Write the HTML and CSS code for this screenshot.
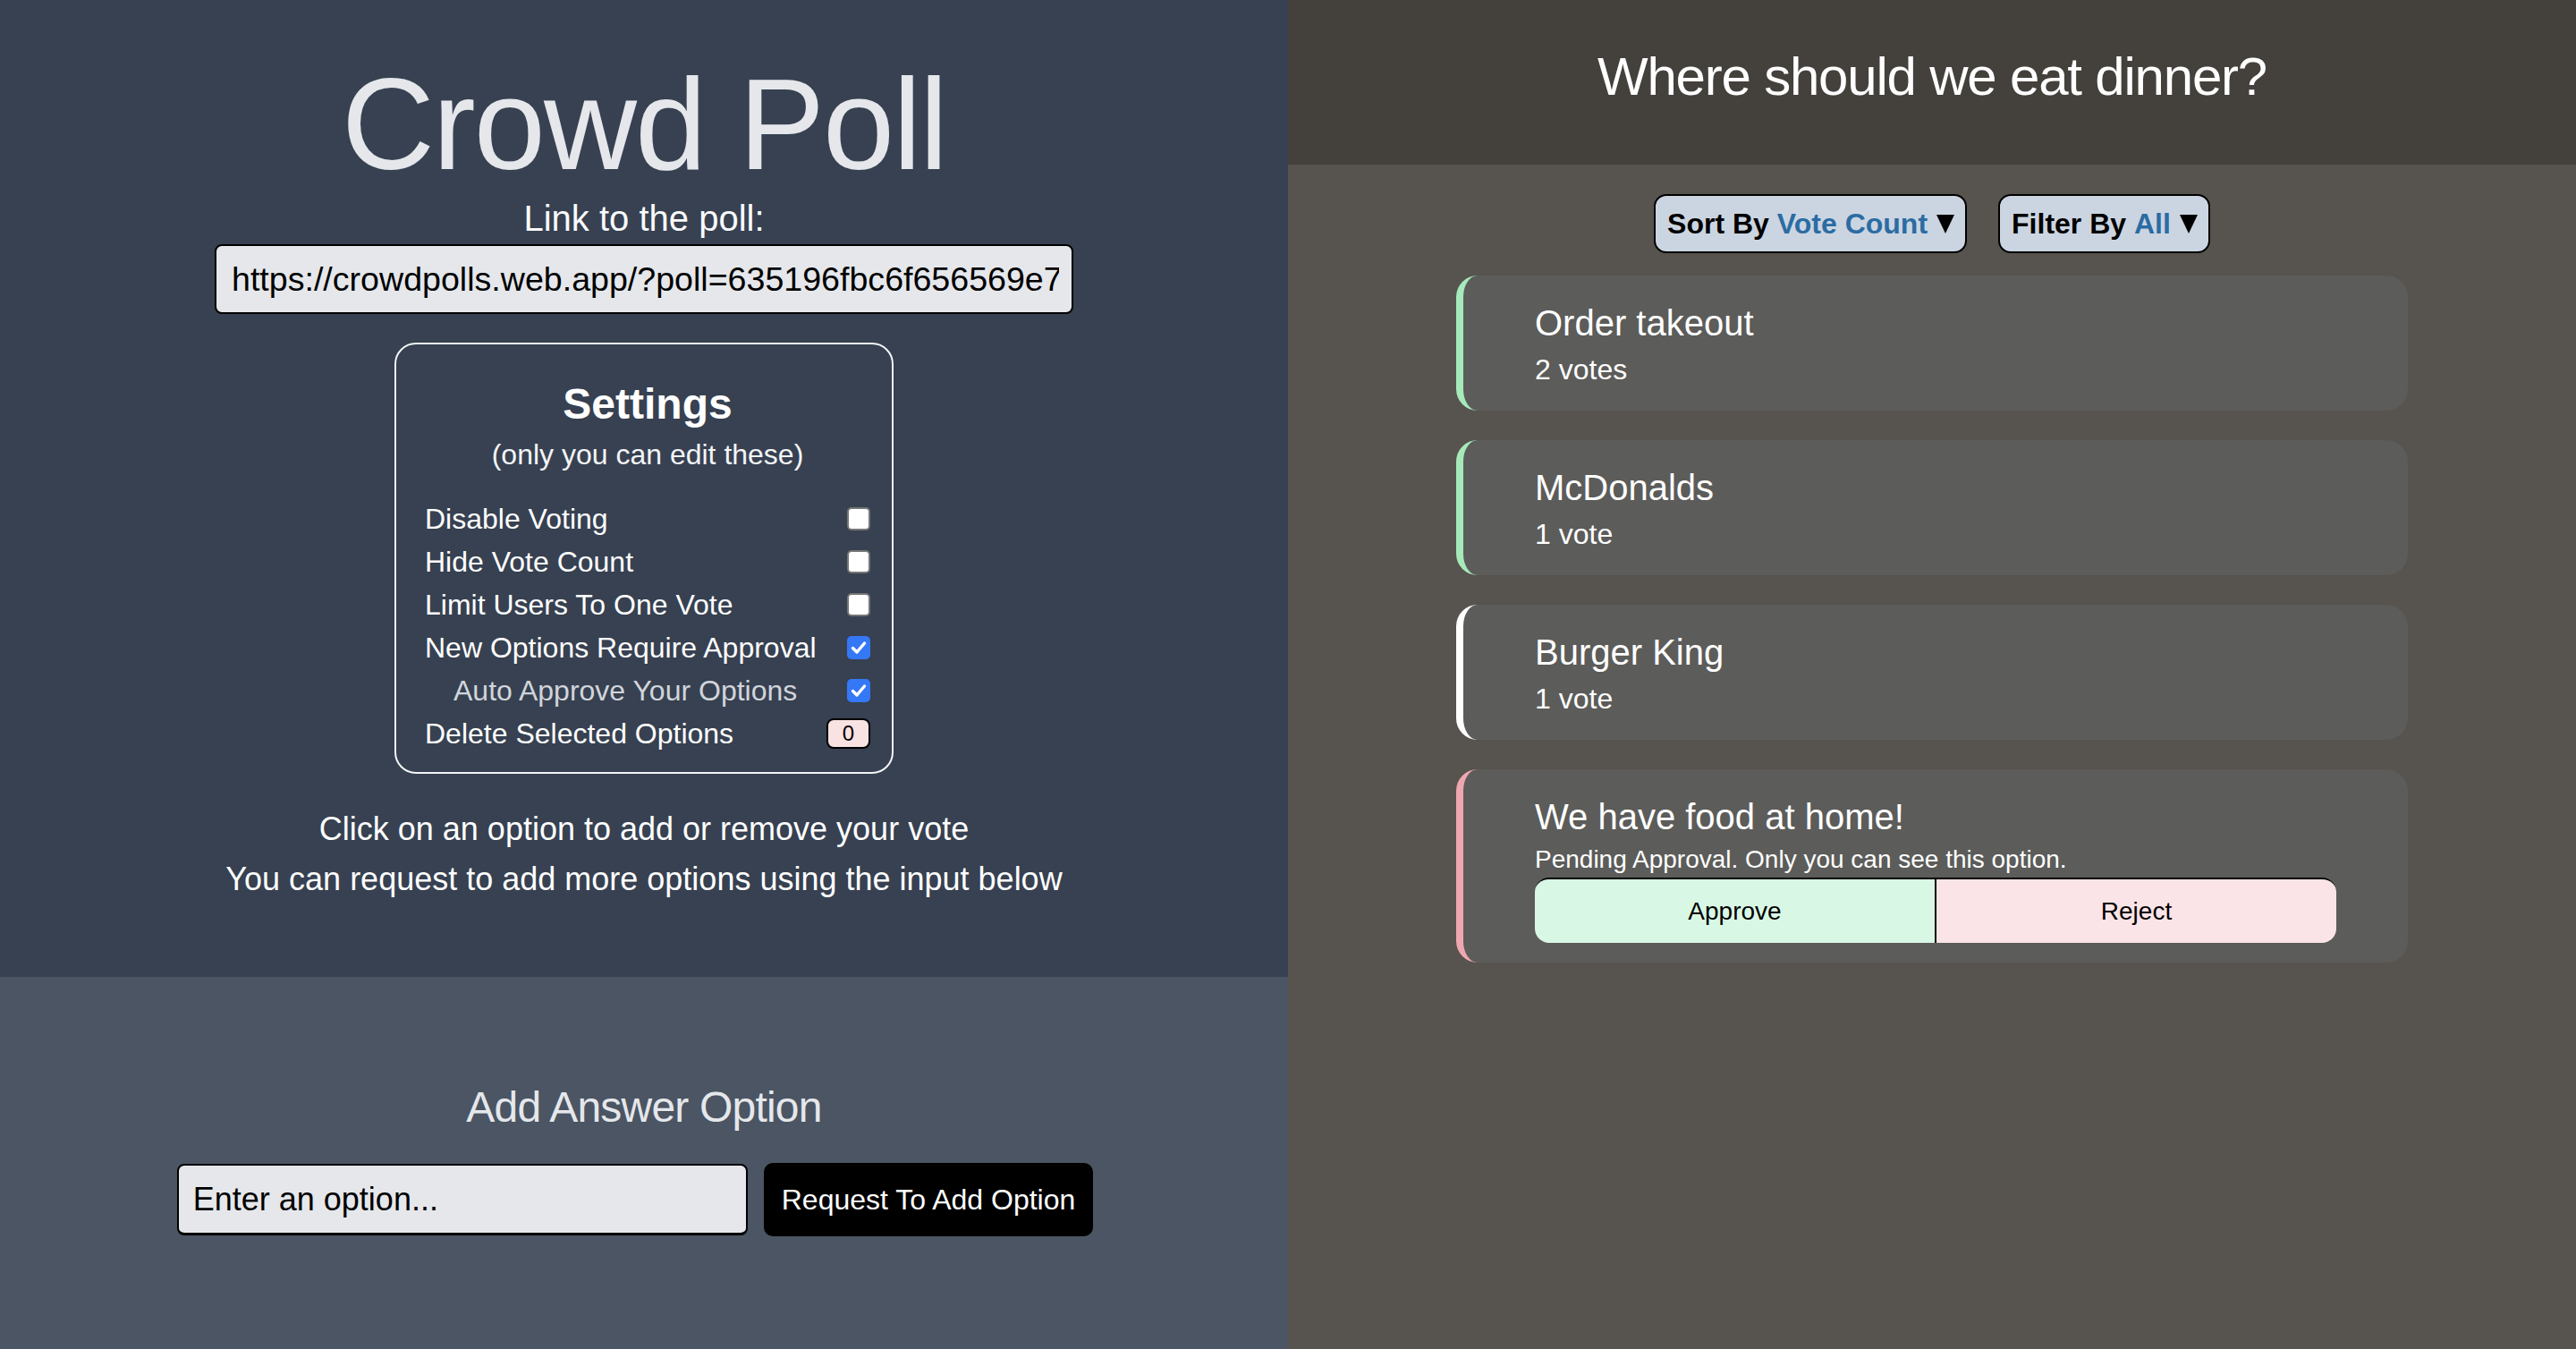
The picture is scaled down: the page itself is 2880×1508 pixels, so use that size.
FILE: index.html
```html
<!DOCTYPE html>
<html lang="en">
<head>
<meta charset="utf-8">
<title>Crowd Poll</title>
<link rel="stylesheet" href="styles.css">
</head>
<body>
<main class="app">
  <section class="left">
    <div class="left-top">
      <h1 class="brand">Crowd Poll</h1>
      <div class="link-label">Link to the poll:</div>
      <input class="link-input" type="text" readonly value="https://crowdpolls.web.app/?poll=635196fbc6f656569e7d2a41">
      <div class="settings">
        <h2 class="settings-title">Settings</h2>
        <div class="settings-sub">(only you can edit these)</div>
        <div class="settings-rows">
          <div class="row"><span>Disable Voting</span><span class="check"></span></div>
          <div class="row"><span>Hide Vote Count</span><span class="check"></span></div>
          <div class="row"><span>Limit Users To One Vote</span><span class="check"></span></div>
          <div class="row"><span>New Options Require Approval</span><span class="check on"><svg viewBox="0 0 26 26" width="26" height="26"><path d="M6.5 13.5 L11 18 L19.5 8" fill="none" stroke="#fff" stroke-width="3.4" stroke-linecap="round" stroke-linejoin="round"/></svg></span></div>
          <div class="row sub"><span>Auto Approve Your Options</span><span class="check on"><svg viewBox="0 0 26 26" width="26" height="26"><path d="M6.5 13.5 L11 18 L19.5 8" fill="none" stroke="#fff" stroke-width="3.4" stroke-linecap="round" stroke-linejoin="round"/></svg></span></div>
          <div class="row"><span>Delete Selected Options</span><button class="del-btn">0</button></div>
        </div>
      </div>
      <p class="hint">Click on an option to add or remove your vote<br>You can request to add more options using the input below</p>
    </div>
    <div class="left-bottom">
      <h2 class="add-title">Add Answer Option</h2>
      <div class="add-row">
        <input class="add-input" type="text" placeholder="Enter an option...">
        <button class="add-btn">Request To Add Option</button>
      </div>
    </div>
  </section>
  <section class="right">
    <header class="question">Where should we eat dinner?</header>
    <div class="poll">
      <div class="controls">
        <button class="pick">Sort By <span class="val">Vote Count</span><svg class="tri" viewBox="0 0 20 22" width="20" height="22"><path d="M0 1 H20 L10 22 Z" fill="#000"/></svg></button>
        <button class="pick">Filter By <span class="val">All</span><svg class="tri" viewBox="0 0 20 22" width="20" height="22"><path d="M0 1 H20 L10 22 Z" fill="#000"/></svg></button>
      </div>
      <div class="cards">
        <div class="card voted">
          <div class="card-title">Order takeout</div>
          <div class="card-votes">2 votes</div>
        </div>
        <div class="card voted">
          <div class="card-title">McDonalds</div>
          <div class="card-votes">1 vote</div>
        </div>
        <div class="card plain">
          <div class="card-title">Burger King</div>
          <div class="card-votes">1 vote</div>
        </div>
        <div class="card pending">
          <div class="card-title">We have food at home!</div>
          <div class="card-pending">Pending Approval. Only you can see this option.</div>
          <div class="decide">
            <button class="approve">Approve</button>
            <button class="reject">Reject</button>
          </div>
        </div>
      </div>
    </div>
  </section>
</main>
</body>
</html>
```

FILE: styles.css
```css
* { box-sizing: border-box; }

html, body {
  margin: 0;
  padding: 0;
  width: 2880px;
  height: 1508px;
  overflow: hidden;
}

body {
  font-family: "Liberation Sans", Arial, sans-serif;
  color: #fff;
}

.app {
  display: grid;
  grid-template-columns: 1440px 1440px;
  height: 1508px;
}

/* ---------- left ---------- */
.left {
  display: flex;
  flex-direction: column;
  height: 1508px;
}

.left-top {
  height: 1092px;
  background: #374151;
  display: flex;
  flex-direction: column;
  align-items: center;
  padding-top: 68px;
}

.brand {
  margin: 0;
  font-size: 144px;
  line-height: 144px;
  font-weight: 400;
  letter-spacing: -2px;
  color: #e5e7eb;
}

.link-label {
  margin-top: 4px;
  font-size: 40px;
  line-height: 56px;
  color: #f9fafb;
}

.link-input {
  margin-top: 1px;
  width: 960px;
  height: 78px;
  background: #e5e7eb;
  border: 2px solid #000;
  border-radius: 8px;
  padding: 0 14px 0 17px;
  font-family: "Liberation Sans", Arial, sans-serif;
  font-size: 37.6px;
  color: #000;
  outline: none;
}

.settings {
  margin-top: 32px;
  width: 558px;
  border: 2px solid #f3f4f6;
  border-radius: 24px;
  padding: 35px 24px 19px 32px;
  display: flex;
  flex-direction: column;
}

.settings-title {
  margin: 0;
  text-align: center;
  font-size: 48px;
  line-height: 64px;
  font-weight: 700;
  color: #fff;
}

.settings-sub {
  text-align: center;
  font-size: 32px;
  line-height: 48px;
  color: #f3f4f6;
}

.settings-rows {
  margin-top: 24px;
  display: flex;
  flex-direction: column;
}

.row {
  height: 48px;
  display: flex;
  align-items: center;
  justify-content: space-between;
  font-size: 32px;
  color: #fff;
}

.row.sub {
  padding-left: 32px;
  color: #d1d5db;
}

.check {
  width: 26px;
  height: 26px;
  border-radius: 5px;
  border: 2px solid #767676;
  background: #fff;
  display: flex;
  align-items: center;
  justify-content: center;
  flex: none;
}

.check.on {
  border: none;
  background: #3478f6;
}

.check svg { display: block; }

.del-btn {
  height: 34px;
  padding: 0 16px;
  background: #f9e2e2;
  border: 2px solid #000;
  border-radius: 8px;
  font-family: "Liberation Sans", Arial, sans-serif;
  font-size: 24px;
  color: #000;
}

.hint {
  margin: 34px 0 0;
  text-align: center;
  font-size: 36px;
  line-height: 56px;
  color: #fff;
}

.left-bottom {
  flex: 1;
  background: #4b5563;
  display: flex;
  flex-direction: column;
  align-items: center;
  padding-top: 114px;
}

.add-title {
  margin: 0;
  font-size: 48px;
  line-height: 64px;
  font-weight: 400;
  letter-spacing: -0.8px;
  color: #e5e7eb;
}

.add-row {
  margin-top: 30px;
  display: flex;
  align-items: center;
  gap: 18px;
  padding-right: 20px;
}

.add-input {
  width: 638px;
  height: 80px;
  background: #e5e7eb;
  border: 2px solid #000;
  border-bottom-width: 3px;
  border-radius: 8px;
  padding: 0 16px;
  font-family: "Liberation Sans", Arial, sans-serif;
  font-size: 36px;
  color: #000;
  outline: none;
}

.add-input::placeholder { color: #000; }

.add-btn {
  height: 82px;
  padding: 0 20px;
  background: #000;
  border: none;
  border-radius: 10px;
  font-family: "Liberation Sans", Arial, sans-serif;
  font-size: 32px;
  color: #fff;
}

/* ---------- right ---------- */
.right {
  display: flex;
  flex-direction: column;
  height: 1508px;
  background: #57534e;
}

.question {
  height: 184px;
  background: #44403c;
  padding-top: 50px;
  text-align: center;
  font-size: 60px;
  line-height: 72px;
  letter-spacing: -1.2px;
  color: #fff;
}

.poll {
  display: flex;
  flex-direction: column;
  align-items: center;
}

.controls {
  margin-top: 33px;
  display: flex;
  gap: 35px;
}

.pick {
  height: 66px;
  display: flex;
  align-items: center;
  padding: 0 12px 0 13px;
  background: #cbd5e1;
  border: 2px solid #000;
  border-radius: 14px;
  font-family: "Liberation Sans", Arial, sans-serif;
  font-size: 32px;
  font-weight: 700;
  color: #000;
  white-space: pre;
}

.pick .val { color: #2b6ca3; }

.pick .tri { margin-left: 10px; display: block; }

.cards {
  margin-top: 25px;
  width: 1064px;
  display: flex;
  flex-direction: column;
  gap: 33px;
}

.card {
  background: #5c5c5a;
  border-radius: 24px;
  border-left: 8px solid #fff;
  padding: 25px 24px 22px 80px;
}

.card.voted { border-left-color: #a6e9bb; }
.card.plain { border-left-color: #ffffff; }
.card.pending { border-left-color: #eea7b1; }

.card-title {
  font-size: 40px;
  line-height: 56px;
  color: #fff;
}

.card-votes {
  font-size: 32px;
  line-height: 48px;
  color: #fff;
}

.card-pending {
  font-size: 28px;
  line-height: 40px;
  color: #fff;
}

.decide {
  width: 896px;
  height: 73px;
  display: flex;
  border-top: 2px solid #000;
  border-radius: 16px;
  overflow: hidden;
}

.decide button {
  flex: 1;
  border: none;
  font-family: "Liberation Sans", Arial, sans-serif;
  font-size: 28px;
  color: #000;
}

.approve {
  background: #d9f7e5;
  border-right: 2px solid #000 !important;
}

.reject { background: #fbe4e7; }
```
